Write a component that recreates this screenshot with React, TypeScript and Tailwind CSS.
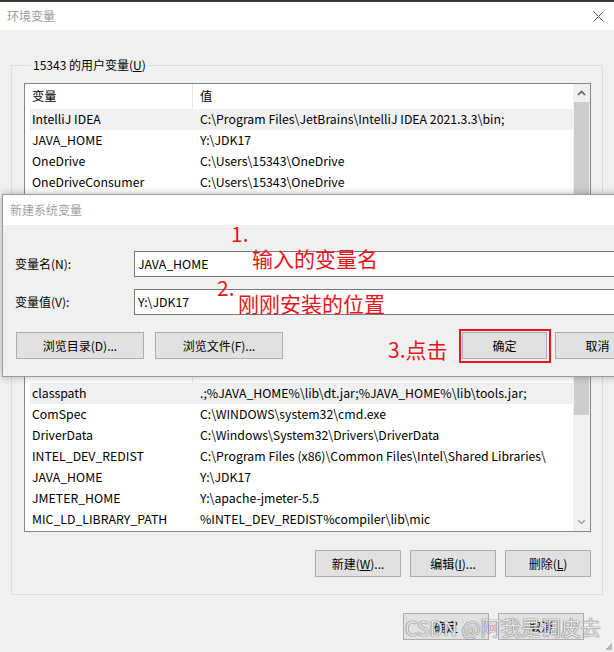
import React from 'react';

type Row = [string, string];

const userRows: Row[] = [
  ['IntelliJ IDEA', 'C:\\Program Files\\JetBrains\\IntelliJ IDEA 2021.3.3\\bin;'],
  ['JAVA_HOME', 'Y:\\JDK17'],
  ['OneDrive', 'C:\\Users\\15343\\OneDrive'],
  ['OneDriveConsumer', 'C:\\Users\\15343\\OneDrive'],
  ['Path', 'C:\\Users\\15343\\AppData\\Local\\Microsoft\\WindowsApps;'],
  ['TEMP', 'C:\\Users\\15343\\AppData\\Local\\Temp'],
  ['TMP', 'C:\\Users\\15343\\AppData\\Local\\Temp'],
];

const systemRows: Row[] = [
  ['classpath', '.;%JAVA_HOME%\\lib\\dt.jar;%JAVA_HOME%\\lib\\tools.jar;'],
  ['ComSpec', 'C:\\WINDOWS\\system32\\cmd.exe'],
  ['DriverData', 'C:\\Windows\\System32\\Drivers\\DriverData'],
  ['INTEL_DEV_REDIST', 'C:\\Program Files (x86)\\Common Files\\Intel\\Shared Libraries\\'],
  ['JAVA_HOME', 'Y:\\JDK17'],
  ['JMETER_HOME', 'Y:\\apache-jmeter-5.5'],
  ['MIC_LD_LIBRARY_PATH', '%INTEL_DEV_REDIST%compiler\\lib\\mic'],
];

function WinButton({ children, className = '' }: { children: React.ReactNode; className?: string }) {
  return (
    <div
      className={`flex h-[27px] items-center justify-center border border-[#adadad] bg-[#e1e1e1] text-[12px] text-black ${className}`}
    >
      {children}
    </div>
  );
}

function VarList({ rows, height, thumb }: { rows: Row[]; height: string; thumb: string }) {
  return (
    <div className={`flex border border-[#828790] bg-white text-[12.3px] ${height}`}>
      <div className="flex min-w-0 flex-1 flex-col overflow-hidden">
        <div className="flex h-[25px] shrink-0 items-center">
          <div className="flex h-full w-[168px] items-center border-r border-[#e5e5e5] pl-[7px]">变量</div>
          <div className="pl-[7px]">值</div>
        </div>
        {rows.map(([name, value], i) => (
          <div
            key={name + i}
            className={`ml-[5px] flex h-[21px] shrink-0 items-center whitespace-nowrap ${i === 0 ? 'bg-[#f0f0f0]' : ''}`}
          >
            <div className="w-[163px] shrink-0 pl-[2px]">{name}</div>
            <div className="pl-[7px]">{value}</div>
          </div>
        ))}
      </div>
      <div className="flex w-[17px] shrink-0 flex-col bg-[#f0f0f0]">
        <div className="flex h-[18px] shrink-0 items-center justify-center">
          <svg width="9" height="6" viewBox="0 0 9 6">
            <path d="M1 5 L4.5 1.5 L8 5" fill="none" stroke="#606060" strokeWidth="1.6" />
          </svg>
        </div>
        <div className={`mx-[1px] shrink-0 bg-[#cdcdcd] ${thumb}`} />
        <div className="flex-1" />
        <div className="flex h-[18px] shrink-0 items-center justify-center">
          <svg width="9" height="6" viewBox="0 0 9 6">
            <path d="M1 1 L4.5 4.5 L8 1" fill="none" stroke="#a0a0a0" strokeWidth="1.4" />
          </svg>
        </div>
      </div>
    </div>
  );
}

export default function App() {
  return (
    <div className="relative h-[652px] w-[614px] overflow-hidden bg-[#f0f0f0] font-['Noto_Sans_CJK_SC',sans-serif] text-[12px] text-black">
      <div className="h-[2px] bg-[#3c3c3c]" />
      <div className="flex h-[28px] items-center justify-between bg-white pl-[7px] pr-[10px]">
        <span className="-mt-[1px] text-[#9a9a9a]">环境变量</span>
        <svg width="11" height="11" viewBox="0 0 11 11">
          <path d="M0.5 0.5 L10.5 10.5 M10.5 0.5 L0.5 10.5" stroke="#555" strokeWidth="1" />
        </svg>
      </div>

      <div className="px-[11px] pt-[26px]">
        <fieldset className="border border-[#dcdcdc] pb-[18px] pl-[12px] pr-[11px]">
          <legend className="ml-[7px] px-[2px] leading-[18px]">
            15343 的用户变量(<u>U</u>)
          </legend>
          <div className="mt-[9px]">
            <VarList rows={userRows} height="h-[174px]" thumb="h-[120px]" />
          </div>
          <div className="mt-[16px] flex justify-end gap-[9px]">
            <WinButton className="w-[86px]">新建(N)...</WinButton>
            <WinButton className="w-[86px]">编辑(E)...</WinButton>
            <WinButton className="w-[86px]">删除(D)</WinButton>
          </div>
        </fieldset>

        <fieldset className="mt-[10px] border border-[#dcdcdc] pb-[17px] pl-[12px] pr-[11px]">
          <legend className="ml-[7px] px-[2px] leading-[18px]">
            系统变量(<u>S</u>)
          </legend>
          <div className="mt-[10px]">
            <VarList rows={systemRows} height="h-[175px]" thumb="h-[39px]" />
          </div>
          <div className="mt-[18px] flex justify-end gap-[9px]">
            <WinButton className="w-[86px]">
              新建(<u>W</u>)...
            </WinButton>
            <WinButton className="w-[86px]">
              编辑(<u>I</u>)...
            </WinButton>
            <WinButton className="w-[86px]">
              删除(<u>L</u>)
            </WinButton>
          </div>
        </fieldset>

        <div className="mt-[18px] flex justify-end gap-[9px] pr-[19px]">
          <WinButton className="w-[86px]">确定</WinButton>
          <WinButton className="w-[86px]">取消</WinButton>
        </div>
      </div>

      {/* 新建系统变量 dialog */}
      <div className="absolute left-[2px] top-[194px] flex h-[183px] w-[650px] flex-col border border-[#9b9b9b] bg-[#f0f0f0] shadow-[0_0_8px_rgba(0,0,0,0.28)]">
        <div className="flex h-[30px] shrink-0 items-center bg-white pl-[7px] text-[#a0a0a0]">新建系统变量</div>
        <div className="flex flex-1 flex-col pl-[12px] pr-[11px] pt-[26px]">
          <div className="grid grid-cols-[119px_1fr] items-center gap-y-[12px]">
            <div>变量名(N):</div>
            <div className="flex h-[26px] items-center border border-[#7a7a7a] bg-white pl-[3px] text-[12.3px]">JAVA_HOME</div>
            <div>变量值(V):</div>
            <div className="flex h-[26px] items-center border border-[#7a7a7a] bg-white pl-[3px] text-[12.3px]">Y:\JDK17</div>
          </div>
          <div className="mt-[17px] flex pl-[1px]">
            <WinButton className="w-[128px]">浏览目录(D)...</WinButton>
            <WinButton className="ml-[11px] w-[128px]">浏览文件(F)...</WinButton>
            <div className="flex-1" />
            <WinButton className="w-[85px]">确定</WinButton>
            <WinButton className="ml-[8px] w-[85px]">取消</WinButton>
          </div>
        </div>
      </div>

      {/* red annotations */}
      <div className="absolute left-[459px] top-[329px] h-[34px] w-[92px] border-2 border-[#e8141c]" />
      <span className="absolute left-[231px] top-[223px] text-[21px] leading-none text-[#e8141c]">1.</span>
      <span className="absolute left-[252px] top-[248px] text-[21px] leading-none text-[#e8141c]">输入的变量名</span>
      <span className="absolute left-[217px] top-[277px] text-[21px] leading-none text-[#e8141c]">2.</span>
      <span className="absolute left-[238px] top-[293px] text-[21px] leading-none text-[#e8141c]">刚刚安装的位置</span>
      <span className="absolute left-[388px] top-[339px] text-[21px] leading-none text-[#e8141c]">3.点击</span>

      {/* watermark */}
      <span className="absolute left-[405px] top-[618px] text-[20px] leading-none text-white/85 [text-shadow:0_0_1px_#555,0_0_1px_#555]">
        CSDN @阿我是调皮去
      </span>

      {/* resize grip */}
      <svg className="absolute bottom-[2px] right-[2px]" width="6" height="6" viewBox="0 0 6 6">
        <rect x="4" y="0" width="2" height="2" fill="#b8b8b8" />
        <rect x="2" y="2" width="2" height="2" fill="#b8b8b8" />
        <rect x="4" y="2" width="2" height="2" fill="#b8b8b8" />
        <rect x="0" y="4" width="2" height="2" fill="#b8b8b8" />
        <rect x="2" y="4" width="2" height="2" fill="#b8b8b8" />
        <rect x="4" y="4" width="2" height="2" fill="#b8b8b8" />
      </svg>
    </div>
  );
}
